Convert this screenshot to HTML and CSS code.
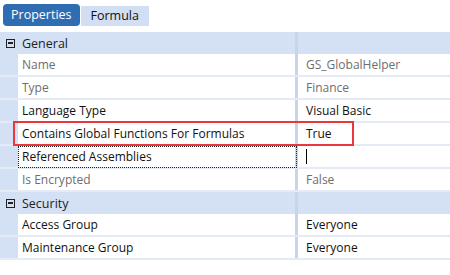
FILE: index.html
```html
<!DOCTYPE html>
<html lang="en">
<head>
  <meta charset="UTF-8">
  <link rel="stylesheet" href="styles.css">
</head>
<body>
  <!-- Tabs -->
  <div class="tabs">
    <div class="tab active">Properties</div>
    <div class="tab">Formula</div>
  </div>

  <!-- Property grid -->
  <div class="grid">
    <div class="group">
      <span class="toggle"></span><span class="group-name">General</span>
      <span class="group-fill"></span>
    </div>
    <div class="row">
      <div class="gutter"></div>
      <div class="name dim">Name</div>
      <div class="value dim">GS_GlobalHelper</div>
    </div>
    <div class="row">
      <div class="gutter"></div>
      <div class="name dim">Type</div>
      <div class="value dim">Finance</div>
    </div>
    <div class="row">
      <div class="gutter"></div>
      <div class="name">Language Type</div>
      <div class="value">Visual Basic</div>
    </div>
    <div class="row">
      <div class="gutter"></div>
      <div class="name">Contains Global Functions For Formulas</div>
      <div class="value">True</div>
      <div class="highlight"></div>
    </div>
    <div class="row">
      <div class="gutter"></div>
      <div class="name focused">Referenced Assemblies</div>
      <div class="value"><span class="caret"></span></div>
    </div>
    <div class="row">
      <div class="gutter"></div>
      <div class="name dim">Is Encrypted</div>
      <div class="value dim">False</div>
    </div>
    <div class="group">
      <span class="toggle"></span><span class="group-name">Security</span>
      <span class="group-fill"></span>
    </div>
    <div class="row">
      <div class="gutter"></div>
      <div class="name">Access Group</div>
      <div class="value">Everyone</div>
    </div>
    <div class="row">
      <div class="gutter"></div>
      <div class="name">Maintenance Group</div>
      <div class="value">Everyone</div>
    </div>
  </div>
</body>
</html>
```

FILE: styles.css
```css
html {
	background-color: #fff;
}

body {
	margin: 0;
	font-family: "Open Sans", "Noto Sans", sans-serif;
	font-size: 12px;
	color: #111;
}

.tabs {
	display: flex;
	align-items: flex-end;
	height: 26px;
	padding-left: 3px;
	gap: 1px;
}

.tab {
	height: 20px;
	line-height: 20px;
	padding: 0 10px;
	background-color: #d2dff3;
	font-size: 12.5px;
	color: #111;
}

.tab.active {
	height: 22px;
	line-height: 22px;
	padding: 0 8px;
	background-color: #2f6db3;
	color: #fff;
	border-radius: 4px;
}

.grid {
	margin-top: 6px;
}

.group {
	display: flex;
	align-items: center;
	height: 22px;
	background-color: #d4e1f5;
}

.toggle {
	position: relative;
	box-sizing: border-box;
	width: 9px;
	height: 9px;
	margin-left: 6px;
	margin-right: 7px;
	border: 1.5px solid #222;
}

.toggle::after {
	content: "";
	position: absolute;
	left: 1px;
	right: 1px;
	top: 2.5px;
	height: 1.5px;
	background-color: #222;
}

.group-name {
	width: 273px;
	font-size: 12.5px;
	color: #222;
}

.group-fill {
	align-self: stretch;
	flex: 1;
	border-left: 3px solid #c6d5ee;
}

.row {
	position: relative;
	display: flex;
	height: 21px;
	border-bottom: 2px solid #e4ebf7;
}

.gutter {
	width: 18px;
	background-color: #d4e1f5;
}

.name {
	position: relative;
	box-sizing: border-box;
	width: 277px;
	padding-left: 4px;
	line-height: 21px;
	white-space: nowrap;
}

.value {
	flex: 1;
	padding-left: 8px;
	line-height: 21px;
	border-left: 3px solid #c6d5ee;
}

.dim {
	color: #6e6e6e;
}

.focused::after {
	content: "";
	position: absolute;
	left: 0;
	top: 0;
	right: -2px;
	bottom: -1px;
	border: 1px dotted #222;
}

.caret {
	display: inline-block;
	width: 1px;
	height: 15px;
	margin-top: 3px;
	vertical-align: top;
	background-color: #000;
}

.highlight {
	position: absolute;
	left: 13px;
	top: -2px;
	width: 337px;
	height: 21px;
	border: 2px solid #e8383d;
}
```
